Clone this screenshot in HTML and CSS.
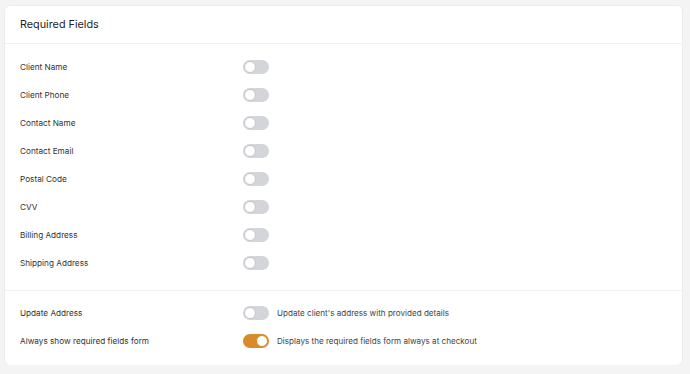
FILE: index.html
```html
<!DOCTYPE html>
<html lang="en">
<head>
    <meta charset="UTF-8">
    <meta name="viewport" content="width=device-width, initial-scale=1.0">
    <title>Required Fields</title>
    <link rel="stylesheet" href="styles.css">
</head>
<body>
<div class="card">
    <!-- Header -->
    <div class="card-header">Required Fields</div>

    <!-- Field toggles -->
    <div class="section">
        <div class="row">
            <span class="label">Client Name</span>
            <span class="toggle"></span>
        </div>
        <div class="row">
            <span class="label">Client Phone</span>
            <span class="toggle"></span>
        </div>
        <div class="row">
            <span class="label">Contact Name</span>
            <span class="toggle"></span>
        </div>
        <div class="row">
            <span class="label">Contact Email</span>
            <span class="toggle"></span>
        </div>
        <div class="row">
            <span class="label">Postal Code</span>
            <span class="toggle"></span>
        </div>
        <div class="row">
            <span class="label">CVV</span>
            <span class="toggle"></span>
        </div>
        <div class="row">
            <span class="label">Billing Address</span>
            <span class="toggle"></span>
        </div>
        <div class="row">
            <span class="label">Shipping Address</span>
            <span class="toggle"></span>
        </div>
    </div>

    <!-- Options -->
    <div class="section options">
        <div class="row">
            <span class="label">Update Address</span>
            <span class="toggle"></span>
            <span class="desc">Update client's address with provided details</span>
        </div>
        <div class="row">
            <span class="label">Always show required fields form</span>
            <span class="toggle on"></span>
            <span class="desc">Displays the required fields form always at checkout</span>
        </div>
    </div>
</div>
</body>
</html>
```

FILE: styles.css
```css
body {
    font-family: Inter, "Noto Sans", sans-serif;
    margin: 0;
    padding: 6px 8px 0 5px;
    background: #f4f4f4;
    color: #2b2b2b;
}
.card {
    background: #fff;
    border-radius: 5px;
    box-shadow: 0 0 0 1px #ececec, 0 1px 2px rgba(0, 0, 0, 0.06);
}
.card-header {
    height: 37px;
    display: flex;
    align-items: center;
    padding: 0 15px;
    font-size: 10.8px;
    color: #1f1f1f;
    border-bottom: 1px solid #f1f1f1;
}
.section {
    padding: 9px 15px 13px;
}
.options {
    border-top: 1px solid #f1f1f1;
    padding: 8px 15px 10px;
}
.row {
    display: flex;
    align-items: center;
    height: 28px;
}
.label {
    width: 223px;
    font-size: 8.2px;
    color: #333;
}
.toggle {
    position: relative;
    width: 26px;
    height: 14px;
    border-radius: 7px;
    background: #d3d5da;
    flex-shrink: 0;
}
.toggle::after {
    content: "";
    position: absolute;
    left: 1px;
    top: 1px;
    width: 12px;
    height: 12px;
    border-radius: 50%;
    background: #fff;
    box-sizing: border-box;
    border: 1px solid #c4c6cb;
}
.toggle.on {
    background: #d98a2a;
}
.toggle.on::after {
    left: 13px;
    border-color: #d98a2a;
}
.desc {
    margin-left: 8px;
    font-size: 8.1px;
    color: #444;
}
```
